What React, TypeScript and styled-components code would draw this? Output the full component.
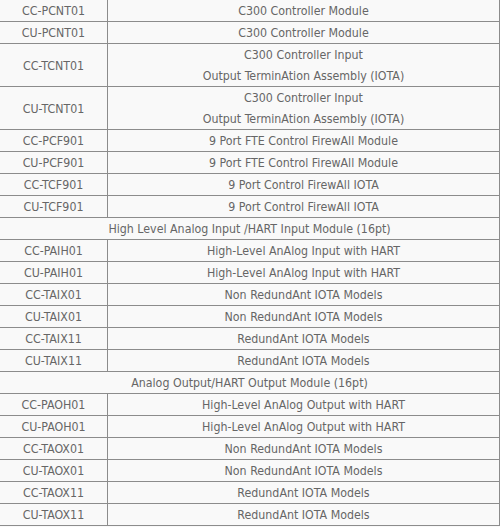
import styled, { createGlobalStyle } from 'styled-components';

const GlobalStyle = createGlobalStyle`
  html, body {
    margin: 0;
    padding: 0;
    background: #f9f9f9;
  }
`;

const Wrapper = styled.div`
  width: 500px;
  overflow: hidden;
`;

const Table = styled.table`
  width: 501px;
  margin: -1px 0 0 -1px;
  border-collapse: collapse;
  font-family: "DejaVu Sans Condensed", "DejaVu Sans", sans-serif;
  font-size: 12.3px;
  color: #666;
`;

const Cell = styled.td<{ $narrow?: boolean }>`
  border: 1px solid #8c8c8c;
  padding: 2px 0 0;
  line-height: 19px;
  text-align: center;
  vertical-align: middle;
  width: ${({ $narrow }) => ($narrow ? '107px' : 'auto')};
`;

const Line = styled.div`
  & + & {
    margin-top: 2px;
  }
`;

type Row =
  | { kind: 'item'; code: string; lines: string[] }
  | { kind: 'section'; title: string };

const rows: Row[] = [
  { kind: 'item', code: 'CC-PCNT01', lines: ['C300 Controller Module'] },
  { kind: 'item', code: 'CU-PCNT01', lines: ['C300 Controller Module'] },
  { kind: 'item', code: 'CC-TCNT01', lines: ['C300 Controller Input', 'Output TerminAtion Assembly (IOTA)'] },
  { kind: 'item', code: 'CU-TCNT01', lines: ['C300 Controller Input', 'Output TerminAtion Assembly (IOTA)'] },
  { kind: 'item', code: 'CC-PCF901', lines: ['9 Port FTE Control FirewAll Module'] },
  { kind: 'item', code: 'CU-PCF901', lines: ['9 Port FTE Control FirewAll Module'] },
  { kind: 'item', code: 'CC-TCF901', lines: ['9 Port Control FirewAll IOTA'] },
  { kind: 'item', code: 'CU-TCF901', lines: ['9 Port Control FirewAll IOTA'] },
  { kind: 'section', title: 'High Level Analog Input /HART Input Module (16pt)' },
  { kind: 'item', code: 'CC-PAIH01', lines: ['High-Level AnAlog Input with HART'] },
  { kind: 'item', code: 'CU-PAIH01', lines: ['High-Level AnAlog Input with HART'] },
  { kind: 'item', code: 'CC-TAIX01', lines: ['Non RedundAnt IOTA Models'] },
  { kind: 'item', code: 'CU-TAIX01', lines: ['Non RedundAnt IOTA Models'] },
  { kind: 'item', code: 'CC-TAIX11', lines: ['RedundAnt IOTA Models'] },
  { kind: 'item', code: 'CU-TAIX11', lines: ['RedundAnt IOTA Models'] },
  { kind: 'section', title: 'Analog Output/HART Output Module (16pt)' },
  { kind: 'item', code: 'CC-PAOH01', lines: ['High-Level AnAlog Output with HART'] },
  { kind: 'item', code: 'CU-PAOH01', lines: ['High-Level AnAlog Output with HART'] },
  { kind: 'item', code: 'CC-TAOX01', lines: ['Non RedundAnt IOTA Models'] },
  { kind: 'item', code: 'CU-TAOX01', lines: ['Non RedundAnt IOTA Models'] },
  { kind: 'item', code: 'CC-TAOX11', lines: ['RedundAnt IOTA Models'] },
  { kind: 'item', code: 'CU-TAOX11', lines: ['RedundAnt IOTA Models'] },
];

export default function App() {
  return (
    <>
      <GlobalStyle />
      <Wrapper>
        <Table>
          <tbody>
            {rows.map((row, i) =>
              row.kind === 'section' ? (
                <tr key={i}>
                  <Cell colSpan={2}>{row.title}</Cell>
                </tr>
              ) : (
                <tr key={i}>
                  <Cell $narrow>{row.code}</Cell>
                  <Cell>
                    {row.lines.map((line, j) => (
                      <Line key={j}>{line}</Line>
                    ))}
                  </Cell>
                </tr>
              )
            )}
          </tbody>
        </Table>
      </Wrapper>
    </>
  );
}
